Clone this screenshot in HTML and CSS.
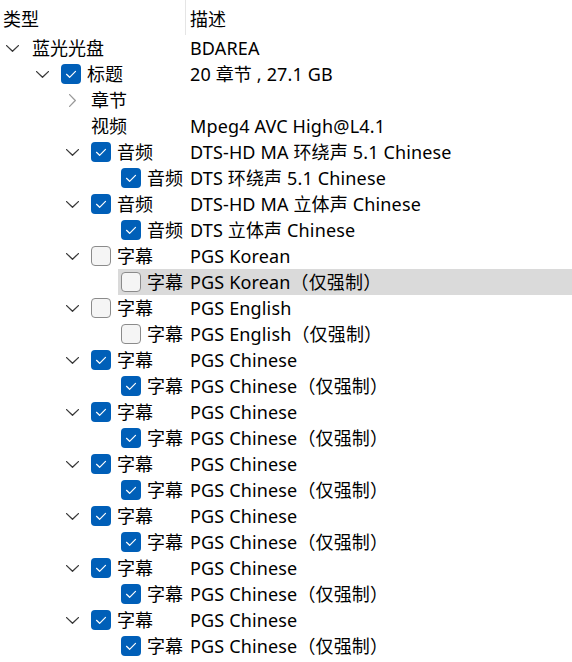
FILE: index.html
```html
<!DOCTYPE html>
<html lang="zh">
<head>
<meta charset="utf-8">
<title>Tree</title>
<link rel="stylesheet" href="styles.css">
</head>
<body>
<div class="tree">
  <div class="header">
    <div class="hcell first">类型</div>
    <div class="hcell second">描述</div>
  </div>

  <div class="row l0"><div class="name"><span class="exp"><svg class="down" width="13" height="7" viewBox="0 0 13 7"><path d="M0.6 0.6 L6.5 6.3 L12.4 0.6"/></svg></span><span class="label">蓝光光盘</span></div><div class="desc">BDAREA</div></div>

  <div class="row l1"><div class="name"><span class="exp"><svg class="down" width="13" height="7" viewBox="0 0 13 7"><path d="M0.6 0.6 L6.5 6.3 L12.4 0.6"/></svg></span><span class="cb on"><svg width="20" height="20" viewBox="0 0 20 20"><path d="M5.5 10.3 L8.6 13.3 L14.5 7.4"/></svg></span><span class="label">标题</span></div><div class="desc">20 章节 , 27.1 GB</div></div>

  <div class="row l2"><div class="name"><span class="exp"><svg class="right" width="7" height="13" viewBox="0 0 7 13"><path d="M0.6 0.6 L6.3 6.5 L0.6 12.4"/></svg></span><span class="label">章节</span></div><div class="desc"></div></div>

  <div class="row l2"><div class="name"><span class="exp"></span><span class="label">视频</span></div><div class="desc">Mpeg4 AVC High@L4.1</div></div>

  <div class="row l2"><div class="name"><span class="exp"><svg class="down" width="13" height="7" viewBox="0 0 13 7"><path d="M0.6 0.6 L6.5 6.3 L12.4 0.6"/></svg></span><span class="cb on"><svg width="20" height="20" viewBox="0 0 20 20"><path d="M5.5 10.3 L8.6 13.3 L14.5 7.4"/></svg></span><span class="label">音频</span></div><div class="desc">DTS-HD MA 环绕声 5.1 Chinese</div></div>
  <div class="row l3"><div class="name"><span class="exp"></span><span class="cb on"><svg width="20" height="20" viewBox="0 0 20 20"><path d="M5.5 10.3 L8.6 13.3 L14.5 7.4"/></svg></span><span class="label">音频</span></div><div class="desc">DTS 环绕声 5.1 Chinese</div></div>

  <div class="row l2"><div class="name"><span class="exp"><svg class="down" width="13" height="7" viewBox="0 0 13 7"><path d="M0.6 0.6 L6.5 6.3 L12.4 0.6"/></svg></span><span class="cb on"><svg width="20" height="20" viewBox="0 0 20 20"><path d="M5.5 10.3 L8.6 13.3 L14.5 7.4"/></svg></span><span class="label">音频</span></div><div class="desc">DTS-HD MA 立体声 Chinese</div></div>
  <div class="row l3"><div class="name"><span class="exp"></span><span class="cb on"><svg width="20" height="20" viewBox="0 0 20 20"><path d="M5.5 10.3 L8.6 13.3 L14.5 7.4"/></svg></span><span class="label">音频</span></div><div class="desc">DTS 立体声 Chinese</div></div>

  <div class="row l2"><div class="name"><span class="exp"><svg class="down" width="13" height="7" viewBox="0 0 13 7"><path d="M0.6 0.6 L6.5 6.3 L12.4 0.6"/></svg></span><span class="cb off"></span><span class="label">字幕</span></div><div class="desc">PGS Korean</div></div>
  <div class="row l3 sel"><div class="name"><span class="exp"></span><span class="cb off"></span><span class="label">字幕</span></div><div class="desc">PGS Korean（仅强制）</div></div>

  <div class="row l2"><div class="name"><span class="exp"><svg class="down" width="13" height="7" viewBox="0 0 13 7"><path d="M0.6 0.6 L6.5 6.3 L12.4 0.6"/></svg></span><span class="cb off"></span><span class="label">字幕</span></div><div class="desc">PGS English</div></div>
  <div class="row l3"><div class="name"><span class="exp"></span><span class="cb off"></span><span class="label">字幕</span></div><div class="desc">PGS English（仅强制）</div></div>

  <div class="row l2"><div class="name"><span class="exp"><svg class="down" width="13" height="7" viewBox="0 0 13 7"><path d="M0.6 0.6 L6.5 6.3 L12.4 0.6"/></svg></span><span class="cb on"><svg width="20" height="20" viewBox="0 0 20 20"><path d="M5.5 10.3 L8.6 13.3 L14.5 7.4"/></svg></span><span class="label">字幕</span></div><div class="desc">PGS Chinese</div></div>
  <div class="row l3"><div class="name"><span class="exp"></span><span class="cb on"><svg width="20" height="20" viewBox="0 0 20 20"><path d="M5.5 10.3 L8.6 13.3 L14.5 7.4"/></svg></span><span class="label">字幕</span></div><div class="desc">PGS Chinese（仅强制）</div></div>

  <div class="row l2"><div class="name"><span class="exp"><svg class="down" width="13" height="7" viewBox="0 0 13 7"><path d="M0.6 0.6 L6.5 6.3 L12.4 0.6"/></svg></span><span class="cb on"><svg width="20" height="20" viewBox="0 0 20 20"><path d="M5.5 10.3 L8.6 13.3 L14.5 7.4"/></svg></span><span class="label">字幕</span></div><div class="desc">PGS Chinese</div></div>
  <div class="row l3"><div class="name"><span class="exp"></span><span class="cb on"><svg width="20" height="20" viewBox="0 0 20 20"><path d="M5.5 10.3 L8.6 13.3 L14.5 7.4"/></svg></span><span class="label">字幕</span></div><div class="desc">PGS Chinese（仅强制）</div></div>

  <div class="row l2"><div class="name"><span class="exp"><svg class="down" width="13" height="7" viewBox="0 0 13 7"><path d="M0.6 0.6 L6.5 6.3 L12.4 0.6"/></svg></span><span class="cb on"><svg width="20" height="20" viewBox="0 0 20 20"><path d="M5.5 10.3 L8.6 13.3 L14.5 7.4"/></svg></span><span class="label">字幕</span></div><div class="desc">PGS Chinese</div></div>
  <div class="row l3"><div class="name"><span class="exp"></span><span class="cb on"><svg width="20" height="20" viewBox="0 0 20 20"><path d="M5.5 10.3 L8.6 13.3 L14.5 7.4"/></svg></span><span class="label">字幕</span></div><div class="desc">PGS Chinese（仅强制）</div></div>

  <div class="row l2"><div class="name"><span class="exp"><svg class="down" width="13" height="7" viewBox="0 0 13 7"><path d="M0.6 0.6 L6.5 6.3 L12.4 0.6"/></svg></span><span class="cb on"><svg width="20" height="20" viewBox="0 0 20 20"><path d="M5.5 10.3 L8.6 13.3 L14.5 7.4"/></svg></span><span class="label">字幕</span></div><div class="desc">PGS Chinese</div></div>
  <div class="row l3"><div class="name"><span class="exp"></span><span class="cb on"><svg width="20" height="20" viewBox="0 0 20 20"><path d="M5.5 10.3 L8.6 13.3 L14.5 7.4"/></svg></span><span class="label">字幕</span></div><div class="desc">PGS Chinese（仅强制）</div></div>

  <div class="row l2"><div class="name"><span class="exp"><svg class="down" width="13" height="7" viewBox="0 0 13 7"><path d="M0.6 0.6 L6.5 6.3 L12.4 0.6"/></svg></span><span class="cb on"><svg width="20" height="20" viewBox="0 0 20 20"><path d="M5.5 10.3 L8.6 13.3 L14.5 7.4"/></svg></span><span class="label">字幕</span></div><div class="desc">PGS Chinese</div></div>
  <div class="row l3"><div class="name"><span class="exp"></span><span class="cb on"><svg width="20" height="20" viewBox="0 0 20 20"><path d="M5.5 10.3 L8.6 13.3 L14.5 7.4"/></svg></span><span class="label">字幕</span></div><div class="desc">PGS Chinese（仅强制）</div></div>

  <div class="row l2"><div class="name"><span class="exp"><svg class="down" width="13" height="7" viewBox="0 0 13 7"><path d="M0.6 0.6 L6.5 6.3 L12.4 0.6"/></svg></span><span class="cb on"><svg width="20" height="20" viewBox="0 0 20 20"><path d="M5.5 10.3 L8.6 13.3 L14.5 7.4"/></svg></span><span class="label">字幕</span></div><div class="desc">PGS Chinese</div></div>
  <div class="row l3"><div class="name"><span class="exp"></span><span class="cb on"><svg width="20" height="20" viewBox="0 0 20 20"><path d="M5.5 10.3 L8.6 13.3 L14.5 7.4"/></svg></span><span class="label">字幕</span></div><div class="desc">PGS Chinese（仅强制）</div></div>
</div>
</body>
</html>
```

FILE: styles.css
```css
html, body {
  margin: 0;
  padding: 0;
  background: #ffffff;
}

body {
  font-family: "Noto Sans", "Noto Sans CJK SC", sans-serif;
  font-size: 18px;
  color: #000000;
  overflow: hidden;
}

.tree {
  display: flex;
  flex-direction: column;
}

.header {
  display: grid;
  grid-template-columns: 185px 1fr;
  height: 35px;
}

.hcell {
  display: flex;
  align-items: center;
  white-space: nowrap;
}

.hcell.first {
  padding-left: 3px;
}

.hcell.second {
  border-left: 1px solid #e5e5e5;
  padding-left: 4px;
}

.row {
  display: grid;
  grid-template-columns: 190px 1fr;
  height: 26px;
  align-items: center;
  white-space: nowrap;
}

.row.sel {
  background: linear-gradient(to right, transparent 118px, #dadada 118px);
}

.name {
  display: flex;
  align-items: center;
  height: 26px;
}

.l1 .name { padding-left: 30px; }
.l2 .name { padding-left: 60px; }
.l3 .name { padding-left: 90px; }

.exp {
  width: 13px;
  height: 13px;
  margin-left: 6px;
  margin-right: 12px;
  display: flex;
  align-items: center;
  justify-content: center;
  flex: none;
}

.exp svg {
  display: block;
  fill: none;
  stroke-width: 1.3;
  stroke-linecap: round;
  stroke-linejoin: round;
}

.exp svg.down {
  stroke: #3a3a3a;
}

.exp svg.right {
  stroke: #9a9a9a;
}

.l0 .label {
  margin-left: 1px;
}

.cb {
  width: 20px;
  height: 20px;
  box-sizing: border-box;
  border-radius: 4px;
  margin-right: 6px;
  flex: none;
  display: block;
}

.cb svg {
  display: block;
  fill: none;
  stroke: #ffffff;
  stroke-width: 1.2;
  stroke-linecap: round;
  stroke-linejoin: round;
}

.cb.on {
  background: #005fb8;
}

.cb.off {
  background: #f5f5f5;
  border: 1px solid #8b8b8b;
}

.label,
.desc {
  line-height: 26px;
}

.desc {
  letter-spacing: 0.15px;
}
```
